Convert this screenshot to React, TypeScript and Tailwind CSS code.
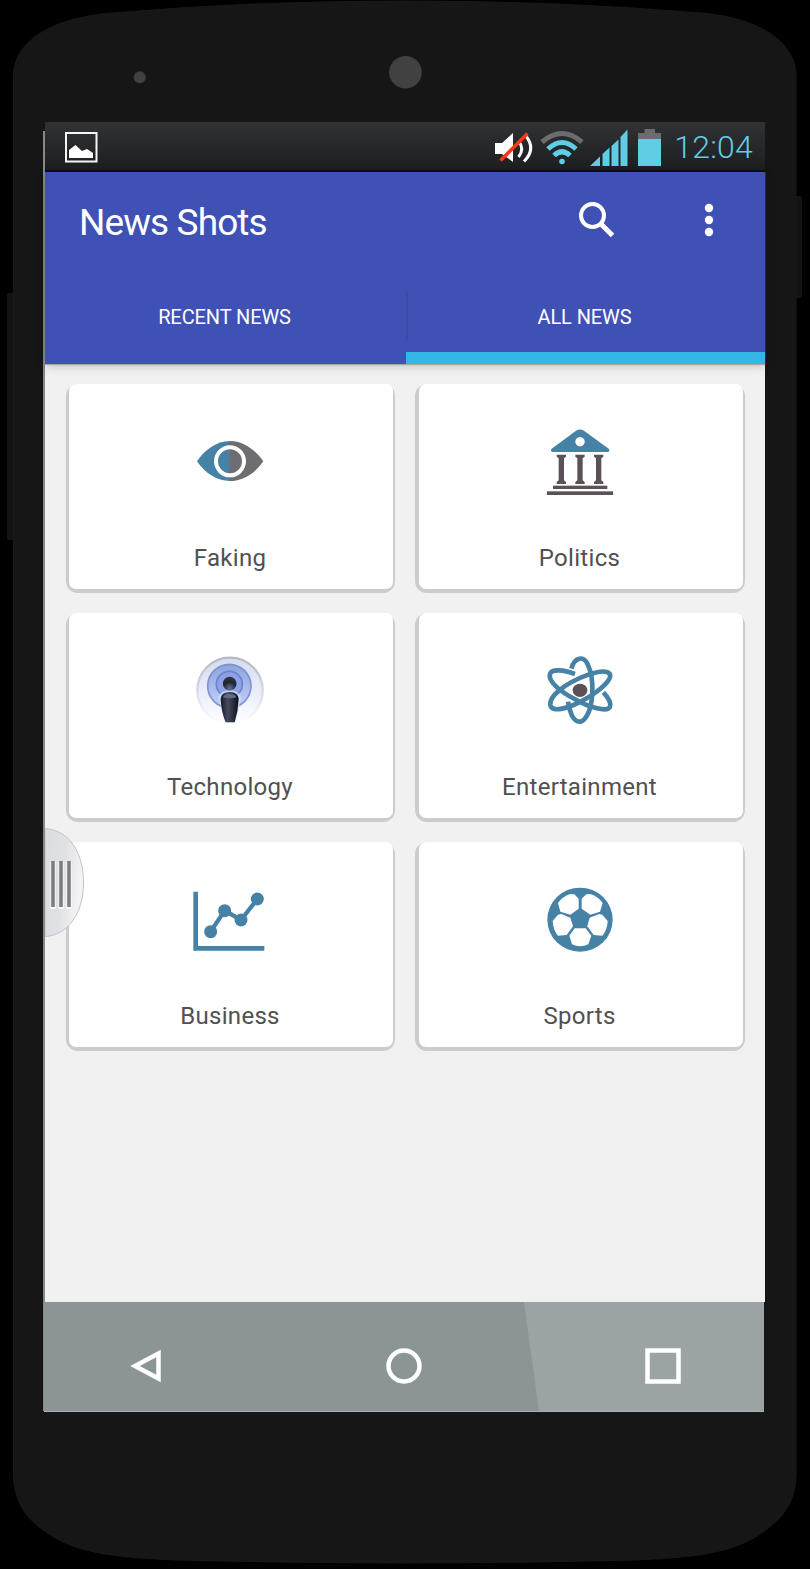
import type { ReactNode } from 'react'

interface Category {
  name: string
  icon: ReactNode
}

const BLUE = '#4682a6'
const DARK = '#5b5158'

const EyeIcon = () => (
  <svg width="120" height="100" viewBox="0 0 360 300">
    <defs>
      <linearGradient id="eye" x1="80" x2="280" gradientUnits="userSpaceOnUse">
        <stop offset="0.47" stopColor={BLUE} />
        <stop offset="0.51" stopColor="#6e6e70" />
      </linearGradient>
    </defs>
    <path d="M81 151C103 117 140 90 180 90S257 117 280 151C257 185 220 210 180 210S103 185 81 151Z" fill="url(#eye)" />
    <circle cx="180" cy="151" r="42" fill="none" stroke="#fff" strokeWidth="12" />
  </svg>
)

const BankIcon = () => (
  <svg width="120" height="100" viewBox="0 0 360 300">
    <path
      fillRule="evenodd"
      d="M94 114L168 59Q180 52 192 59L267 114Q271 122 262 123H99Q90 122 94 114ZM180 78a14 14 0 1 0 .1 0Z"
      fill={BLUE}
    />
    <g fill={DARK}>
      <path d="M110 131h28v6l-6 5v66l6 5v6h-28v-6l6-5v-66l-6-5ZM166 131h28v6l-6 5v66l6 5v6h-28v-6l6-5v-66l-6-5ZM222 131h28v6l-6 5v66l6 5v6h-28v-6l6-5v-66l-6-5Z" />
      <rect x="99" y="224" width="163" height="10" />
      <rect x="81" y="241" width="198" height="11" />
    </g>
  </svg>
)

const PodcastIcon = () => (
  <svg width="120" height="100" viewBox="0 0 360 300">
    <defs>
      <linearGradient id="ring" x2="0" y2="1">
        <stop offset="0" stopColor="#b4b8c4" />
        <stop offset="0.55" stopColor="#d9dcea" />
        <stop offset="1" stopColor="#fff" />
      </linearGradient>
      <linearGradient id="halo" x2="0" y2="1">
        <stop offset="0" stopColor="#d6dcf0" />
        <stop offset="0.6" stopColor="#edf0fc" />
        <stop offset="1" stopColor="#fff" />
      </linearGradient>
      <linearGradient id="wave" x2="0" y2="1">
        <stop offset="0" stopColor="#8ca3dd" />
        <stop offset="1" stopColor="#c4d1fb" />
      </linearGradient>
      <linearGradient id="body" x2="1" y2="0">
        <stop offset="0" stopColor="#171a28" />
        <stop offset="0.4" stopColor="#464a60" />
        <stop offset="1" stopColor="#0d0f19" />
      </linearGradient>
      <radialGradient id="head" cx="0.5" cy="0.85" r="0.8">
        <stop offset="0" stopColor="#63719c" />
        <stop offset="0.6" stopColor="#20242f" />
        <stop offset="1" stopColor="#30343d" />
      </radialGradient>
    </defs>
    <circle cx="180" cy="151" r="98" fill="url(#halo)" stroke="url(#ring)" strokeWidth="7" />
    <circle cx="178" cy="138" r="65" fill="url(#wave)" stroke="#7f94cf" strokeWidth="5" />
    <circle cx="178" cy="133" r="39" fill="#8da2e6" stroke="#6c83cf" strokeWidth="5" />
    <path d="M145 174Q148 152 179 151Q210 152 213 174L197 248H165Z" fill="#d6e0ff" opacity="0.7" />
    <path d="M152 176Q154 157 179 156Q204 157 206 176Q205 212 194 247H167Q153 212 152 176Z" fill="url(#body)" />
    <path d="M159 172Q163 161 179 161Q195 161 199 172Q179 178 159 172Z" fill="#656b8b" />
    <circle cx="179" cy="131" r="20.500" fill="url(#head)" />
  </svg>
)

const AtomIcon = () => (
  <svg width="120" height="100" viewBox="0 0 360 300">
    <g fill="none" stroke={BLUE} strokeWidth="14">
      <path d="M154 86C163 52 191 44 204 75C224 117 220 197 200 228C186 252 169 249 157 229C150 215 147 202 144 185" />
      <path d="M165 102C132 90 95 85 90 102C83 125 124 157 164 177C205 202 265 219 270 199C274 186 264 172 250 157" />
      <path d="M118 151C162 115 251 80 269 101C281 123 219 165 182 185C143 205 94 220 91 194C90 181 102 164 118 151Z" />
    </g>
    <ellipse cx="180" cy="151" rx="22" ry="20" fill={DARK} />
  </svg>
)

const ChartIcon = () => (
  <svg width="120" height="100" viewBox="0 0 360 300">
    <g fill="none" stroke={BLUE} strokeWidth="14">
      <path d="M77 68V238H283" />
      <path d="M122 188L164 125L213 153L262 90" strokeWidth="13" />
    </g>
    <g fill={BLUE}>
      <circle cx="122" cy="188" r="19.500" />
      <circle cx="164" cy="125" r="19.500" />
      <circle cx="213" cy="153" r="19.500" />
      <circle cx="262" cy="90" r="19.500" />
    </g>
  </svg>
)

const BallIcon = () => (
  <svg width="120" height="100" viewBox="0 0 360 300">
    <ellipse cx="180" cy="152" rx="98" ry="96" fill={BLUE} />
    <g fill="#fff">
      <path d="M151 75L163 76L176 89V119L151 137L121 128L114 102Q127 83 151 75Z" />
      <path d="M211 75L199 76L185 89V119L211 137L240 128L248 102Q235 83 211 75Z" />
      <path d="M114 137L124 135L151 146L159 172L140 198L114 200Q99 183 98 156Z" />
      <path d="M247 137L237 135L209 146L202 172L221 198L247 200Q262 183 263 156Z" />
      <path d="M164 178H197L214 200L205 226Q180 238 156 226L148 200Z" />
    </g>
  </svg>
)

const categories: Category[] = [
  { name: 'Faking', icon: <EyeIcon /> },
  { name: 'Politics', icon: <BankIcon /> },
  { name: 'Technology', icon: <PodcastIcon /> },
  { name: 'Entertainment', icon: <AtomIcon /> },
  { name: 'Business', icon: <ChartIcon /> },
  { name: 'Sports', icon: <BallIcon /> },
]

const PhoneBody = () => (
  <svg className="absolute inset-0" width="810" height="1569" viewBox="0 0 810 1569">
    <path d="M13 293H9Q7 293 7 296V537Q7 540 9 540H13ZM796 196H800Q802 196 802 199V295Q802 298 800 298H796Z" fill="#131313" />
    <path
      d="M13.500 76C13.500 40 55 17 113 13Q250 1 405 1T700 13C755 17 796 40 796 76V1473C796 1500 784 1517 767 1529C739 1551 705 1557 634 1560Q520 1563 405 1563T176 1560C105 1557 70 1551 42 1529C25 1517 13.500 1500 13.500 1473Z"
      fill="#161616"
      stroke="#191919"
    />
    <circle cx="405.500" cy="72.300" r="16.300" fill="#414141" />
    <circle cx="139.800" cy="77.300" r="6" fill="#414141" />
  </svg>
)

const StatusBar = () => (
  <div className="flex h-[50px] items-center justify-between border-b-2 border-[#0c0f13] bg-linear-to-b from-[#303235] to-[#1c1e20] pr-[12px] pl-5">
    <svg width="33" height="31" viewBox="0 0 33 31" className="mt-0.5">
      <rect x="1" y="1" width="30.500" height="28.500" fill="none" stroke="#f5f5f5" strokeWidth="2" />
      <path d="M4 18L10.500 13L17 19L22 17L28 21V26H4Z" fill="#fff" />
    </svg>
    <div className="flex items-center">
      <svg width="168" height="40" viewBox="0 0 168 40" className="mt-1 mr-[12px]">
        <path d="M1 15H8L19 5V34L8 26H1Z" fill="#fff" />
        <path d="M24.500 13Q31 21 24.500 29M31 7Q43 20.500 30 33.500" fill="none" stroke="#fff" strokeWidth="3" />
        <path d="M6.500 32.500L33.500 5.500" stroke="#f23c10" strokeWidth="3.500" />
        <path d="M48 14Q68 -3 88 14" fill="none" stroke="#6c6c6c" strokeWidth="5" />
        <path d="M54 21Q68 8 82 21M60 27.500Q68 20 76 27.500" fill="none" stroke="#5fcde4" strokeWidth="5" />
        <circle cx="68" cy="33.500" r="2.800" fill="#5fcde4" />
        <path d="M96 38L106 28.500V38ZM108.500 26L115.500 19.500V38H108.500ZM117.500 18L124.500 11.500V38H117.500ZM126.500 9L133.500 1.500V38H126.500Z" fill="#5fcde4" />
        <path d="M144 11V5H150.500V1H161V5H167V11Z" fill="#6c6c6c" />
        <rect x="144" y="11" width="23" height="27" fill="#5fcde4" />
      </svg>
      <span className="mt-0.5 text-[32px] leading-none font-light tracking-[0.2px] text-[#5fcde4]">12:04</span>
    </div>
  </div>
)

const AppBar = () => (
  <header className="relative z-10 h-48 bg-[#3f51b5] text-white shadow-[0_1px_1px_#a9a9a9,0_2px_9px_rgba(0,0,0,0.22)]">
    <div className="flex h-[98px] items-center pl-[34px]">
      <h1 className="mt-0.5 flex-1 text-[37px] leading-none tracking-[-0.9px]">News Shots</h1>
      <svg width="38" height="38" viewBox="0 0 38 38" fill="none" stroke="#fff" className="mr-[89px] -mt-1">
        <circle cx="15.500" cy="15.500" r="11.500" strokeWidth="4" />
        <path d="M24 24L35.500 35.500" strokeWidth="5" />
      </svg>
      <svg width="10" height="34" viewBox="0 0 10 34" fill="#fff" className="mr-[51px] -mt-0.5">
        <circle cx="5" cy="5" r="4.200" />
        <circle cx="5" cy="17" r="4.200" />
        <circle cx="5" cy="29" r="4.200" />
      </svg>
    </div>
    <nav className="flex h-[94px] text-[20px] tracking-[-0.1px]">
      <button className="flex w-[361px] items-center justify-center pr-0.5">RECENT NEWS</button>
      <button className="relative flex flex-1 items-center justify-center border-b-12 border-[#33b5e5] pt-3 pr-0.5">
        <span className="absolute top-[22px] left-0 h-12 w-0.5 bg-[#394aa8]" />
        ALL NEWS
      </button>
    </nav>
  </header>
)

const DrawerHandle = () => (
  <svg className="absolute top-[828px] left-[45px]" width="40" height="111" viewBox="0 0 40 111">
    <defs>
      <linearGradient id="handle" x2="1" y2="0.3">
        <stop offset="0" stopColor="#dcdde0" />
        <stop offset="0.55" stopColor="#e0e1e4" />
        <stop offset="1" stopColor="#f4f4f6" />
      </linearGradient>
    </defs>
    <path d="M0 .5C24 2 38.500 24 38.500 55S22 107.500 0 108.500Z" fill="url(#handle)" stroke="#c3c3c5" />
    <path d="M8 34V81M16 34V81M24 34V81" stroke="#fff" strokeWidth="5" />
    <path d="M8 33V79M16 33V79M24 33V79" stroke="#7b7d80" strokeWidth="3.600" />
  </svg>
)

const NavigationBar = () => (
  <div className="-ml-[1.500px] flex h-[110px] w-[720px] items-center justify-between border-b border-[#a9b2b2] bg-[linear-gradient(82.200deg,#8c9596_67.300%,#9ba3a4_67.400%)] pt-[18px] pr-[81.500px] pl-[86px]">
    <svg width="32" height="38" viewBox="0 0 32 38" fill="none" stroke="#fff" strokeWidth="4.500">
      <path d="M28.500 6.500V31.500L5 19Z" />
    </svg>
    <svg width="38" height="38" viewBox="0 0 38 38" fill="none" stroke="#fff" strokeWidth="4.500" className="ml-[3px]">
      <circle cx="19" cy="19" r="15.500" />
    </svg>
    <svg width="38" height="38" viewBox="0 0 38 38" fill="none" stroke="#fff" strokeWidth="4.500">
      <rect x="3.500" y="3.500" width="31" height="31" />
    </svg>
  </div>
)

const App = () => {
  return (
    <div className="relative h-[1569px] w-[810px] overflow-hidden bg-black pt-[122px] pl-[45px] font-['Roboto',sans-serif]">
      <PhoneBody />
      <div className="absolute top-[131px] left-[43px] h-[1280px] w-[2px] bg-[#85898a]" />
      <div className="relative w-[720px]">
        <StatusBar />
        <AppBar />
        <main className="h-[938px] bg-[#f1f1f1] px-[20.5px] pt-5">
          <div className="grid grid-cols-2 gap-5">
            {categories.map(({ name, icon }) => (
              <div key={name} className="h-[209px] rounded-[12px] bg-[#cccccc] pr-0.5 pb-1 pl-[3.5px]">
                <div className="flex h-full flex-col items-center rounded-[7px] bg-white pt-[27px] pr-0.5">
                  {icon}
                  <span className="mt-[31px] text-[24px] leading-[32px] tracking-[0.3px] text-[#505050]">{name}</span>
                </div>
              </div>
            ))}
          </div>
        </main>
        <NavigationBar />
      </div>
      <DrawerHandle />
    </div>
  )
}

export default App
